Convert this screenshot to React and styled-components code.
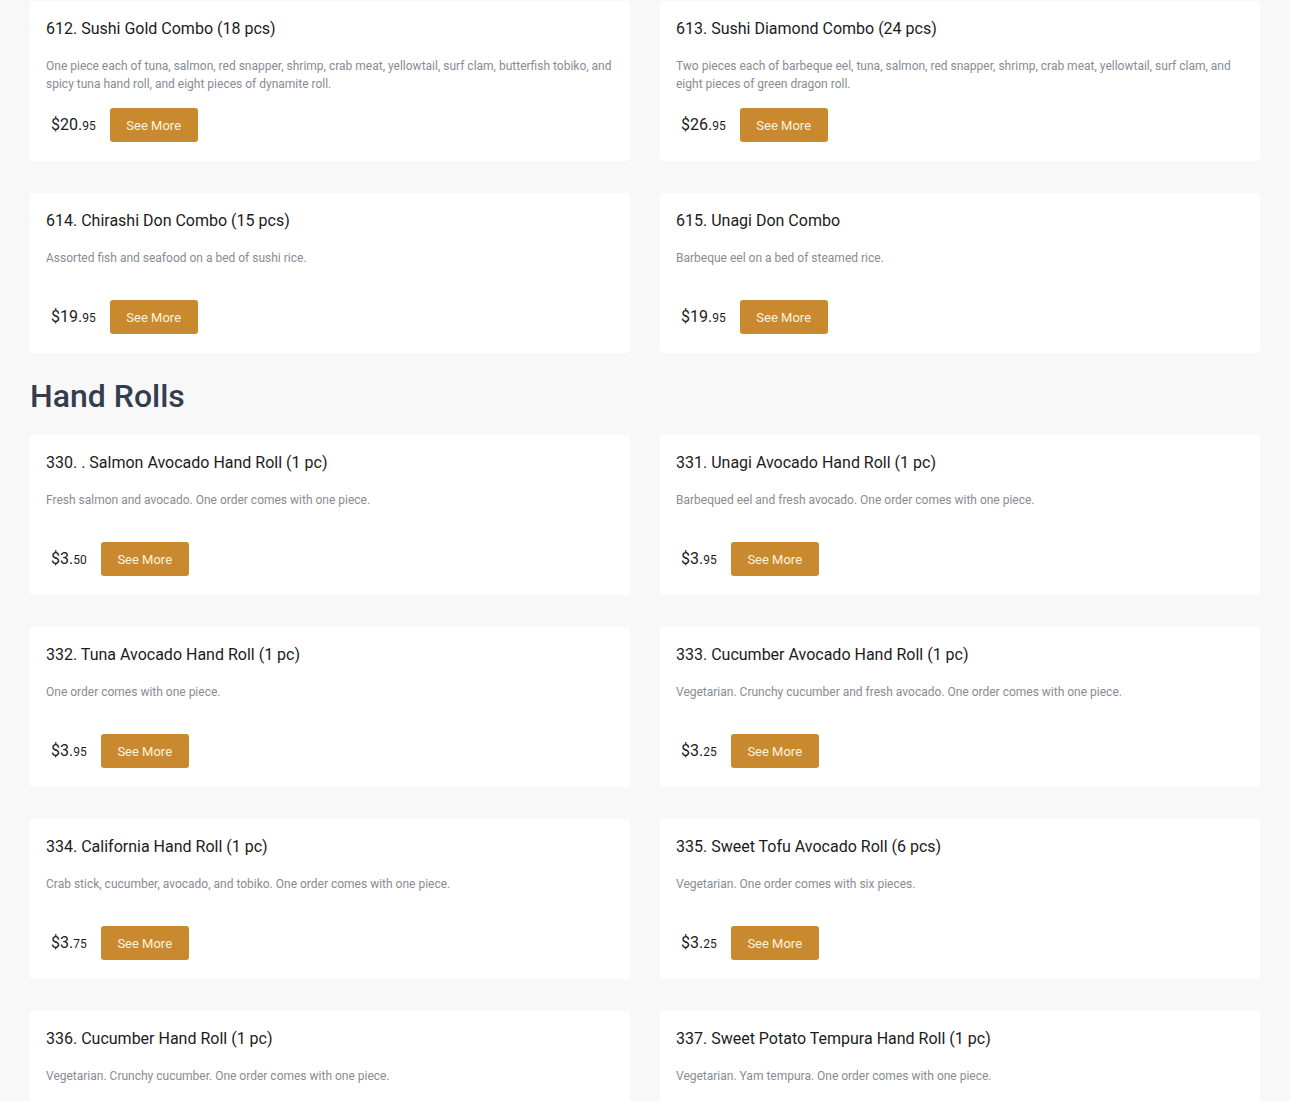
import React from 'react'
import styled, { createGlobalStyle } from 'styled-components'

const Global = createGlobalStyle`
  html, body {
    margin: 0;
    padding: 0;
    background: #f8f8f8;
    font-family: Roboto, "Liberation Sans", Arial, sans-serif;
  }
`

const combos = [
  {
    name: '612. Sushi Gold Combo (18 pcs)',
    desc: 'One piece each of tuna, salmon, red snapper, shrimp, crab meat, yellowtail, surf clam, butterfish tobiko, and spicy tuna hand roll, and eight pieces of dynamite roll.',
    dollars: '20',
    cents: '95',
  },
  {
    name: '613. Sushi Diamond Combo (24 pcs)',
    desc: 'Two pieces each of barbeque eel, tuna, salmon, red snapper, shrimp, crab meat, yellowtail, surf clam, and eight pieces of green dragon roll.',
    dollars: '26',
    cents: '95',
  },
  {
    name: '614. Chirashi Don Combo (15 pcs)',
    desc: 'Assorted fish and seafood on a bed of sushi rice.',
    dollars: '19',
    cents: '95',
  },
  {
    name: '615. Unagi Don Combo',
    desc: 'Barbeque eel on a bed of steamed rice.',
    dollars: '19',
    cents: '95',
  },
]

const handRolls = [
  {
    name: '330. . Salmon Avocado Hand Roll (1 pc)',
    desc: 'Fresh salmon and avocado. One order comes with one piece.',
    dollars: '3',
    cents: '50',
  },
  {
    name: '331. Unagi Avocado Hand Roll (1 pc)',
    desc: 'Barbequed eel and fresh avocado. One order comes with one piece.',
    dollars: '3',
    cents: '95',
  },
  {
    name: '332. Tuna Avocado Hand Roll (1 pc)',
    desc: 'One order comes with one piece.',
    dollars: '3',
    cents: '95',
  },
  {
    name: '333. Cucumber Avocado Hand Roll (1 pc)',
    desc: 'Vegetarian. Crunchy cucumber and fresh avocado. One order comes with one piece.',
    dollars: '3',
    cents: '25',
  },
  {
    name: '334. California Hand Roll (1 pc)',
    desc: 'Crab stick, cucumber, avocado, and tobiko. One order comes with one piece.',
    dollars: '3',
    cents: '75',
  },
  {
    name: '335. Sweet Tofu Avocado Roll (6 pcs)',
    desc: 'Vegetarian. One order comes with six pieces.',
    dollars: '3',
    cents: '25',
  },
  {
    name: '336. Cucumber Hand Roll (1 pc)',
    desc: 'Vegetarian. Crunchy cucumber. One order comes with one piece.',
    dollars: '3',
    cents: '25',
  },
  {
    name: '337. Sweet Potato Tempura Hand Roll (1 pc)',
    desc: 'Vegetarian. Yam tempura. One order comes with one piece.',
    dollars: '3',
    cents: '25',
  },
]

const MenuCard = ({ item }) => {
  return (
    <Card>
      <Title>{item.name}</Title>
      <Desc>{item.desc}</Desc>
      <PriceRow>
        <Price>
          ${item.dollars}.<Cents>{item.cents}</Cents>
        </Price>
        <SeeMore>See More</SeeMore>
      </PriceRow>
    </Card>
  )
}

const App = () => {
  return (
    <Page>
      <Global />
      <Grid>
        {combos.map((item) => (
          <MenuCard key={item.name} item={item} />
        ))}
      </Grid>
      <Heading>Hand Rolls</Heading>
      <Grid>
        {handRolls.map((item) => (
          <MenuCard key={item.name} item={item} />
        ))}
      </Grid>
    </Page>
  )
}

export default App

const Page = styled.div`
    padding: 1px 30px 40px;
    display: flex;
    flex-direction: column;
`

const Grid = styled.div`
    display: grid;
    grid-template-columns: 1fr 1fr;
    column-gap: 30px;
    row-gap: 32px;
`

const Heading = styled.h2`
    margin: 24px 0 20px;
    font-size: 32px;
    line-height: 38px;
    font-weight: 500;
    color: #343d4e;
`

const Card = styled.div`
    background: #ffffff;
    height: 160px;
    box-sizing: border-box;
    padding: 16px 16px 19px;
    border-radius: 3px;
    display: flex;
    flex-direction: column;
`

const Title = styled.div`
    font-size: 16px;
    line-height: 24px;
    color: #1b1b1b;
`

const Desc = styled.div`
    margin-top: 16px;
    font-size: 12px;
    line-height: 18px;
    color: #878c93;
    min-height: 36px;
`

const PriceRow = styled.div`
    margin-top: auto;
    display: flex;
    align-items: center;
`

const Price = styled.div`
    margin: -2px 14px 0 5px;
    font-size: 16px;
    color: #1b1b1b;
`

const Cents = styled.span`
    font-size: 12px;
`

const SeeMore = styled.button`
    height: 34px;
    width: 88px;
    border: none;
    border-radius: 3px;
    background-color: #c9892e;
    color: #fff4de;
    font-family: Roboto, "Liberation Sans", Arial, sans-serif;
    font-size: 13px;
    cursor: pointer;
`
